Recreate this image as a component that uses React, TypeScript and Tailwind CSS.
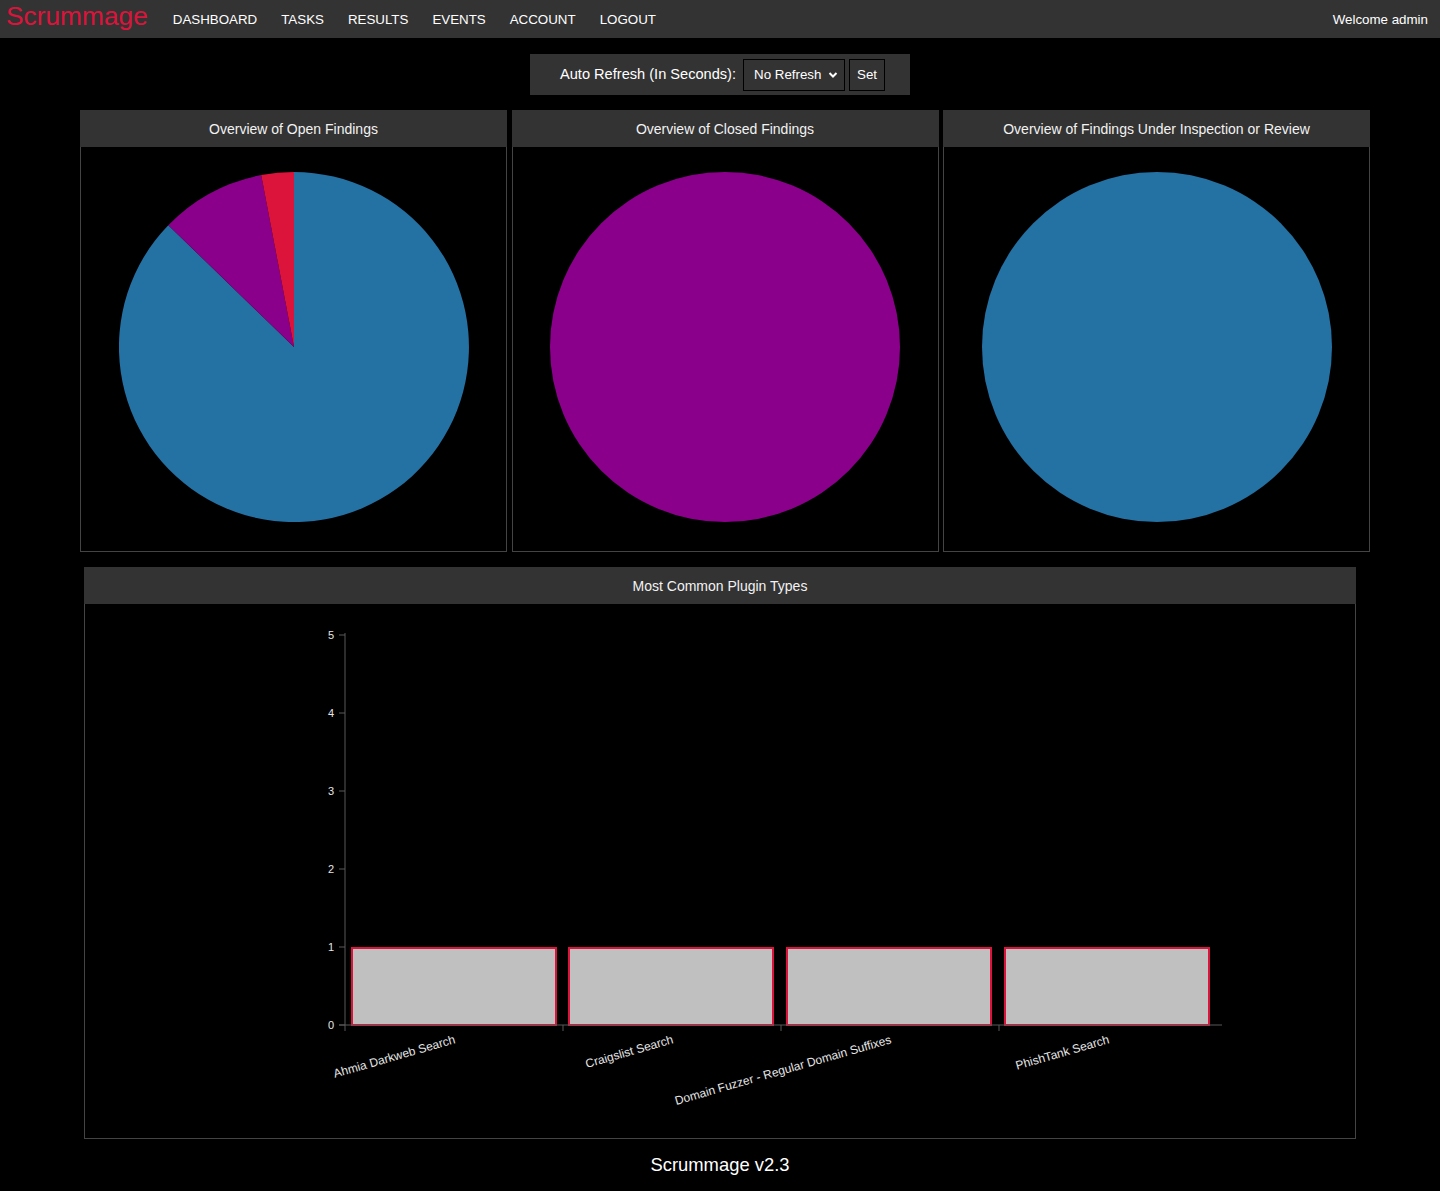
import React from "react";

const navLinks = ["DASHBOARD", "TASKS", "RESULTS", "EVENTS", "ACCOUNT", "LOGOUT"];

const plugins = [
  "Ahmia Darkweb Search",
  "Craigslist Search",
  "Domain Fuzzer - Regular Domain Suffixes",
  "PhishTank Search",
];

function Panel({ title, children }: { title: string; children: React.ReactNode }) {
  return (
    <div className="w-[427px] flex flex-col">
      <div className="h-[37px] bg-[#333] flex items-center justify-center pt-[2px] text-[14px] text-[#f2f2f2]">
        {title}
      </div>
      <div className="border border-t-0 border-[#444] flex justify-center pt-[25px] pb-[29px]">
        {children}
      </div>
    </div>
  );
}

function OpenPie() {
  return (
    <svg width="350" height="350" viewBox="0 0 350 350">
      <path d="M175,175 L175,0 A175,175 0 1 1 49.3,53.2 Z" fill="#2471a3" />
      <path d="M175,175 L49.3,53.2 A175,175 0 0 1 142.2,3.1 Z" fill="#8b008b" />
      <path d="M175,175 L142.2,3.1 A175,175 0 0 1 175,0 Z" fill="#dc143c" />
    </svg>
  );
}

function FullPie({ color }: { color: string }) {
  return (
    <svg width="350" height="350" viewBox="0 0 350 350">
      <circle cx="175" cy="175" r="175" fill={color} />
    </svg>
  );
}

function BarChart() {
  const ticks = [0, 1, 2, 3, 4, 5];
  const bandStarts = [260, 478, 696, 914];
  const barXs = [267, 484, 702, 920];
  return (
    <svg width="1270" height="534" viewBox="0 0 1270 534">
      {barXs.map((x) => (
        <rect key={x} x={x} y="344" width="204" height="77" fill="#c0c0c0" stroke="#dc143c" strokeWidth="2" />
      ))}
      {/* y axis */}
      <line x1="260" y1="29" x2="260" y2="421" stroke="#595959" />
      {ticks.map((t) => {
        const y = 421 - t * 78;
        return (
          <g key={t}>
            <line x1="254" y1={y} x2="260" y2={y} stroke="#595959" />
            <text x="249" y={y + 4} textAnchor="end" fontSize="11" fill="#e6e6e6" fontFamily="'Liberation Sans', Arial, sans-serif">
              {t}
            </text>
          </g>
        );
      })}
      {/* x axis */}
      <line x1="254" y1="421" x2="1137" y2="421" stroke="#595959" />
      {bandStarts.map((x) => (
        <line key={x} x1={x} y1="421" x2={x} y2="427" stroke="#595959" />
      ))}
      {plugins.map((p, i) => {
        const cx = bandStarts[i] + 111;
        return (
          <text
            key={p}
            x={cx}
            y="439"
            textAnchor="end"
            fontSize="12"
            fill="#e6e6e6"
            fontFamily="'Liberation Sans', Arial, sans-serif"
            transform={`rotate(-16 ${cx} 439)`}
          >
            {p}
          </text>
        );
      })}
    </svg>
  );
}

export default function App() {
  return (
    <main className="min-h-screen bg-black text-white font-['Liberation_Sans',Arial,sans-serif]">

      {/* Navbar */}
      <nav className="h-[38px] bg-[#333] flex items-center">
        <span className="pl-[6px] text-[26.3px] leading-none text-[#dc143c] mb-[5px]">Scrummage</span>
        <div className="flex ml-[13px] pt-[1px]">
          {navLinks.map((l) => (
            <span key={l} className="px-[12px] text-[13.33px] text-white">
              {l}
            </span>
          ))}
        </div>
        <span className="ml-auto pr-[12px] pt-[1px] text-[13.33px] text-white">Welcome admin</span>
      </nav>

      {/* Auto refresh */}
      <div className="flex justify-center mt-[16px]">
        <div className="w-[380px] h-[41px] bg-[#333] flex items-center pl-[30px]">
          <span className="text-[14.6px] text-white mr-[7px]">Auto Refresh (In Seconds):</span>
          <div className="w-[102px] h-[32px] border border-black flex items-center pl-[10px] pr-[6px] text-[13.33px] text-white">
            <span>No Refresh</span>
            <svg className="ml-auto" width="10" height="8" viewBox="0 0 10 8">
              <path d="M1.5,2 L5,5.5 L8.5,2" fill="none" stroke="#fff" strokeWidth="2" />
            </svg>
          </div>
          <div className="w-[36px] h-[32px] border border-black ml-[4px] flex items-center justify-center text-[13.33px] text-white">
            Set
          </div>
        </div>
      </div>

      {/* Pie panels */}
      <div className="flex gap-[4.5px] pl-[80px] mt-[15px]">
        <Panel title="Overview of Open Findings">
          <OpenPie />
        </Panel>
        <Panel title="Overview of Closed Findings">
          <FullPie color="#8b008b" />
        </Panel>
        <Panel title="Overview of Findings Under Inspection or Review">
          <FullPie color="#2471a3" />
        </Panel>
      </div>

      {/* Bar chart */}
      <div className="w-[1272px] mx-auto mt-[15px] flex flex-col">
        <div className="h-[37px] bg-[#333] flex items-center justify-center pt-[2px] text-[14px] text-[#f2f2f2]">
          Most Common Plugin Types
        </div>
        <div className="border border-t-0 border-[#444] h-[535px]">
          <BarChart />
        </div>
      </div>

      <div className="text-center text-[18.4px] text-white mt-[12px] pb-[15px]">Scrummage v2.3</div>
    </main>
  );
}
